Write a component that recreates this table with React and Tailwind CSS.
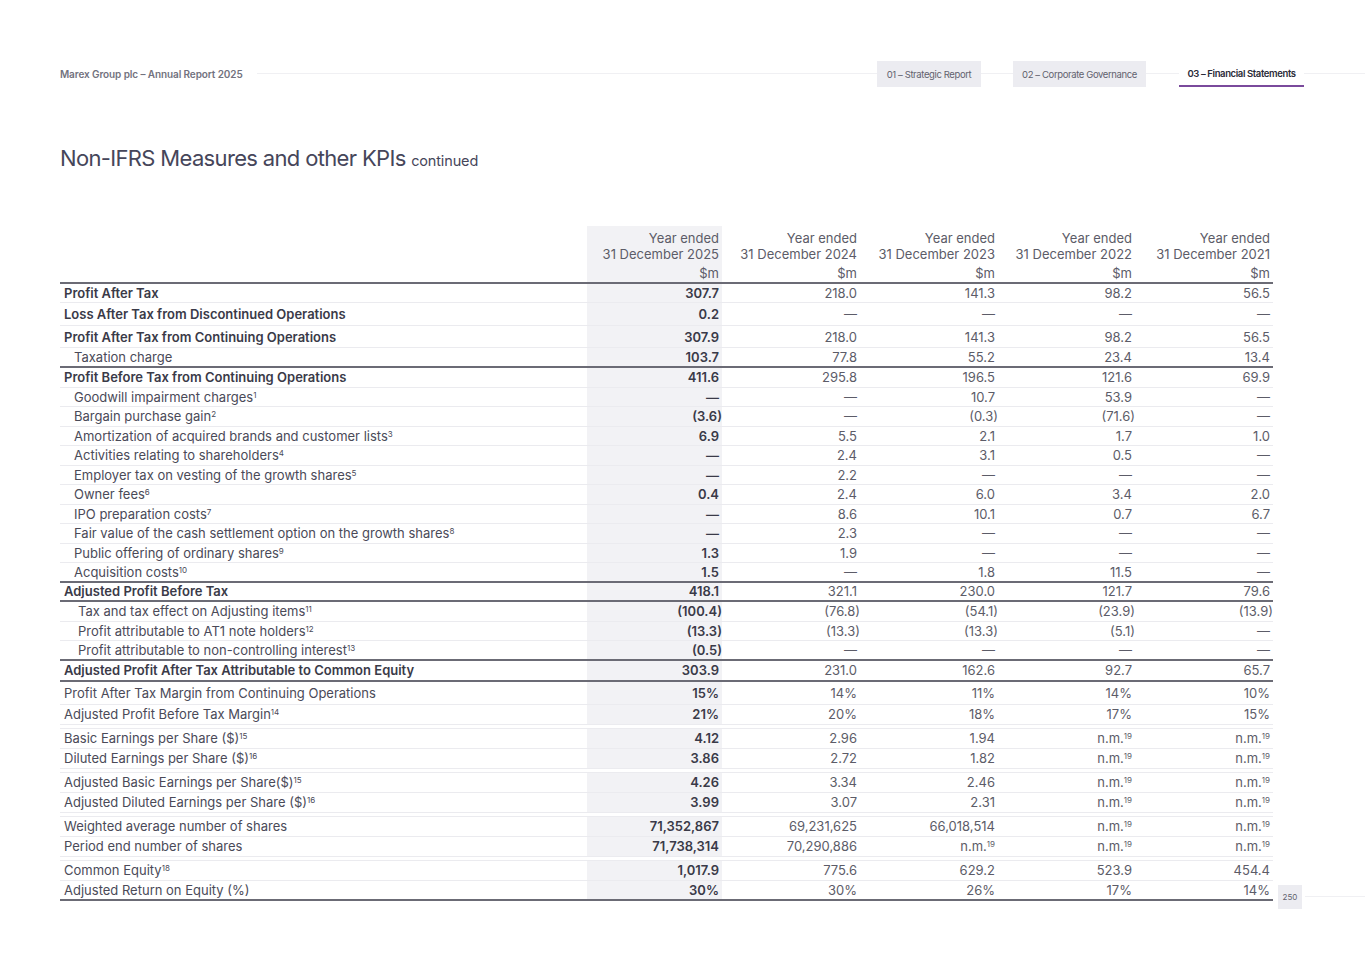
import React from 'react';

const D = '—';
const NM = 'n.m.|19';

const upper = [
  { label: 'Profit After Tax', vals: ['307.7', '218.0', '141.3', '98.2', '56.5'], bold: true, h: 'h-[19px]' },
  { label: 'Loss After Tax from Discontinued Operations', vals: ['0.2', D, D, D, D], bold: true, h: 'h-[23px]' },
  { label: 'Profit After Tax from Continuing Operations', vals: ['307.9', '218.0', '141.3', '98.2', '56.5'], bold: true, h: 'h-[22px]' },
  { label: 'Taxation charge', vals: ['103.7', '77.8', '55.2', '23.4', '13.4'], indent: 1, h: 'h-[20px]', dark: true },
  { label: 'Profit Before Tax from Continuing Operations', vals: ['411.6', '295.8', '196.5', '121.6', '69.9'], bold: true },
  { label: 'Goodwill impairment charges', sup: '1', vals: [D, D, '10.7', '53.9', D], indent: 1 },
  { label: 'Bargain purchase gain', sup: '2', vals: ['(3.6)', D, '(0.3)', '(71.6)', D], indent: 1 },
  { label: 'Amortization of acquired brands and customer lists', sup: '3', vals: ['6.9', '5.5', '2.1', '1.7', '1.0'], indent: 1 },
  { label: 'Activities relating to shareholders', sup: '4', vals: [D, '2.4', '3.1', '0.5', D], indent: 1 },
  { label: 'Employer tax on vesting of the growth shares', sup: '5', vals: [D, '2.2', D, D, D], indent: 1 },
  { label: 'Owner fees', sup: '6', vals: ['0.4', '2.4', '6.0', '3.4', '2.0'], indent: 1 },
  { label: 'IPO preparation costs', sup: '7', vals: [D, '8.6', '10.1', '0.7', '6.7'], indent: 1 },
  { label: 'Fair value of the cash settlement option on the growth shares', sup: '8', vals: [D, '2.3', D, D, D], indent: 1 },
  { label: 'Public offering of ordinary shares', sup: '9', vals: ['1.3', '1.9', D, D, D], indent: 1 },
  { label: 'Acquisition costs', sup: '10', vals: ['1.5', D, '1.8', '11.5', D], indent: 1, dark: true },
  { label: 'Adjusted Profit Before Tax', vals: ['418.1', '321.1', '230.0', '121.7', '79.6'], bold: true, dark: true },
  { label: 'Tax and tax effect on Adjusting items', sup: '11', vals: ['(100.4)', '(76.8)', '(54.1)', '(23.9)', '(13.9)'], indent: 2 },
  { label: 'Profit attributable to AT1 note holders', sup: '12', vals: ['(13.3)', '(13.3)', '(13.3)', '(5.1)', D], indent: 2 },
  { label: 'Profit attributable to non-controlling interest', sup: '13', vals: ['(0.5)', D, D, D, D], indent: 2, dark: true },
  { label: 'Adjusted Profit After Tax Attributable to Common Equity', vals: ['303.9', '231.0', '162.6', '92.7', '65.7'], bold: true, dark: true, h: 'h-[21px]' },
];

const groups = [
  [
    { label: 'Profit After Tax Margin from Continuing Operations', vals: ['15%', '14%', '11%', '14%', '10%'], h: 'h-[23px]' },
    { label: 'Adjusted Profit Before Tax Margin', sup: '14', vals: ['21%', '20%', '18%', '17%', '15%'] },
  ],
  [
    { label: 'Basic Earnings per Share ($)', sup: '15', vals: ['4.12', '2.96', '1.94', NM, NM] },
    { label: 'Diluted Earnings per Share ($)', sup: '16', vals: ['3.86', '2.72', '1.82', NM, NM] },
  ],
  [
    { label: 'Adjusted Basic Earnings per Share($)', sup: '15', vals: ['4.26', '3.34', '2.46', NM, NM] },
    { label: 'Adjusted Diluted Earnings per Share ($)', sup: '16', vals: ['3.99', '3.07', '2.31', NM, NM] },
  ],
  [
    { label: 'Weighted average number of shares', vals: ['71,352,867', '69,231,625', '66,018,514', NM, NM] },
    { label: 'Period end number of shares', vals: ['71,738,314', '70,290,886', NM, NM, NM] },
  ],
  [
    { label: 'Common Equity', sup: '18', vals: ['1,017.9', '775.6', '629.2', '523.9', '454.4'] },
    { label: 'Adjusted Return on Equity (%)', vals: ['30%', '30%', '26%', '17%', '14%'], last: true },
  ],
];

const years = ['2025', '2024', '2023', '2022', '2021'];

const grid = 'grid grid-cols-[527px_135px_138px_138px_137px_138px]';

function Sup({ children }) {
  return <sup className="text-[8px] font-normal">{children}</sup>;
}

function Value({ v, first }) {
  const paren = v.endsWith(')');
  let content = v;
  if (v.includes('|')) {
    const [t, s] = v.split('|');
    content = (
      <>
        {t}
        <Sup>{s}</Sup>
      </>
    );
  }
  return (
    <div
      className={`flex items-center justify-end ${paren ? 'pr-0' : 'pr-[3px]'} ${
        first ? 'bg-[#f2f2f5] font-semibold text-[#3a3a48]' : 'text-[#5c5c68]'
      }`}
    >
      <span>{content}</span>
    </div>
  );
}

function Row({ row }) {
  const pad = row.indent === 2 ? 'pl-[18px]' : row.indent === 1 ? 'pl-[14px]' : 'pl-[4px]';
  const border = row.dark || row.last ? 'border-b-2 border-[#6b6b75]' : 'border-b border-[#ebebef]';
  return (
    <div className={`${grid} ${row.h || 'h-[19.5px]'} ${border}`}>
      <div className={`flex items-center ${pad} ${row.bold ? 'font-semibold text-[#3a3a48]' : 'text-[#4a4a58]'}`}>
        <span>
          {row.label}
          {row.sup && <Sup>{row.sup}</Sup>}
        </span>
      </div>
      {row.vals.map((v, i) => (
        <Value key={i} v={v} first={i === 0} />
      ))}
    </div>
  );
}

export default function App() {
  return (
    <div className="w-[1365px] h-[966px] bg-white font-['Inter',sans-serif] overflow-hidden">
      {/* header */}
      <div className="flex items-center pt-[60px] pl-[60px]">
        <span className="text-[10px] font-semibold text-[#72727e] tracking-[-0.01em] pt-[2px]">
          Marex Group plc – Annual Report 2025
        </span>
        <div className="flex-1 h-px bg-[#f0f0f3] ml-[14px]" />
        <div className="w-[104px] h-[26px] flex items-center justify-center bg-[#ececf1] text-[9.5px] tracking-[-0.04em] text-[#62626e] pt-[3px]">
          01 – Strategic Report
        </div>
        <div className="w-[32px] h-px bg-[#f0f0f3]" />
        <div className="w-[133px] h-[26px] flex items-center justify-center bg-[#ececf1] text-[9.5px] tracking-[-0.04em] text-[#62626e] pt-[3px]">
          02 – Corporate Governance
        </div>
        <div className="w-[33px] h-px bg-[#f0f0f3]" />
        <div className="w-[125px] h-[27px] flex items-center justify-center bg-white border-b-2 border-[#7a4a9c] text-[9.5px] tracking-[-0.04em] font-semibold text-[#2a2a38] pt-[3px]">
          03 – Financial Statements
        </div>
        <div className="w-[61px] h-px bg-[#f0f0f3]" />
      </div>

      {/* title */}
      <h1 className="mt-[57px] pl-[60px] text-[22px] leading-[28px] tracking-[-0.03em] text-[#46465a]">
        Non-IFRS Measures and other KPIs <span className="text-[14.5px] tracking-[-0.01em]">continued</span>
      </h1>

      {/* table */}
      <div className="flex items-end mt-[51px] pl-[60px]">
        <div className="w-[1213px] text-[13px] leading-[16px]">
          <div className={`${grid} border-b-2 border-[#6b6b75] text-[#5c5c68]`}>
            <div />
            {years.map((y, i) => (
              <div
                key={y}
                className={`flex flex-col items-end pt-[4px] pb-[1px] pr-[3px] ${i === 0 ? 'bg-[#f2f2f5]' : ''}`}
              >
                <span>Year ended</span>
                <span>31 December {y}</span>
                <span className="mt-[3px]">$m</span>
              </div>
            ))}
          </div>
          {upper.map((r, i) => (
            <Row key={i} row={r} />
          ))}
          {groups.map((g, gi) => (
            <div key={gi} className={gi > 0 ? 'mt-[3px] border-t border-[#ebebef]' : ''}>
              {g.map((r, i) => (
                <Row key={i} row={{ ...r, h: r.h || 'h-[20px]' }} />
              ))}
            </div>
          ))}
        </div>
        <div className="flex items-center flex-1 -mb-[8px] ml-[5px]">
          <div className="w-[24px] h-[24px] flex items-center justify-center bg-[#ececf1] text-[8px] text-[#62626e]">
            250
          </div>
          <div className="flex-1 h-px bg-[#f0f0f3] ml-[3px]" />
        </div>
      </div>
    </div>
  );
}
